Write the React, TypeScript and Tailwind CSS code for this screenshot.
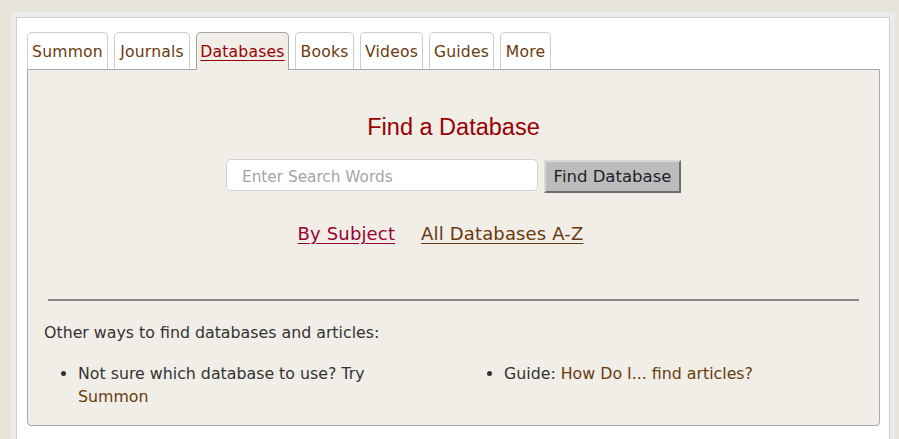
import React from "react";

const tabs: { label: string; w: string }[] = [
  { label: "Summon", w: "w-[81px]" },
  { label: "Journals", w: "w-[76px]" },
  { label: "Databases", w: "w-[93px]" },
  { label: "Books", w: "w-[59px]" },
  { label: "Videos", w: "w-[63px]" },
  { label: "Guides", w: "w-[65px]" },
  { label: "More", w: "w-[51px]" },
];

export default function App() {
  return (
    <div
      className="min-h-screen bg-[#e6e4d9] pt-[12px] pl-[11px] pr-[4px] overflow-hidden"
      style={{ fontFamily: '"DejaVu Sans", Verdana, sans-serif' }}
    >
      <div className="bg-[#ebebeb] pt-[5px] px-[5px] h-[440px]">
        <div className="bg-white border border-[#cfcfcf] border-b-0 h-full pt-[14px] pl-[10px] pr-[9px]">
          <div className="flex items-end gap-[6px]">
            {tabs.map((t) => {
              const active = t.label === "Databases";
              return (
                <div
                  key={t.label}
                  className={
                    (active
                      ? "relative z-10 h-[38px] -mb-px pt-[3px] border-[#a3a3a3] bg-[#f1eee8] text-[#990000] underline underline-offset-[3px]"
                      : "h-[37px] pt-[4px] border-[#cccccc] bg-white text-[#6a3a0c]") +
                    " " +
                    t.w +
                    " flex items-center justify-center rounded-t-[5px] border border-b-0 text-[15.6px] tracking-[0.2px]"
                  }
                >
                  {t.label}
                </div>
              );
            })}
          </div>
          <div className="border border-[#a8a8a8] rounded-b-[4px] bg-[#f1eee8] h-[357px]">
            <div className="pt-[43px] flex flex-col items-center">
              <h2
                className="text-[23.5px] leading-[28px] text-[#990000]"
                style={{ fontFamily: '"Liberation Sans", Arial, sans-serif' }}
              >
                Find a Database
              </h2>
              <div className="mt-[18px] flex items-start">
                <input
                  className="w-[312px] h-[32px] rounded-[5px] border border-[#d2d2d2] bg-white px-[15px] pt-[3px] text-[15.3px] text-[#333] placeholder:text-[#a4a4a4] outline-none"
                  placeholder="Enter Search Words"
                  style={{ fontFamily: '"DejaVu Sans", Verdana, sans-serif' }}
                />
                <button
                  className="ml-[6px] mt-px h-[33px] w-[137px] pt-px bg-[#bcbcbc] border-2 border-t-[#d8d8d8] border-l-[#d8d8d8] border-r-[#6e6e6e] border-b-[#6e6e6e] text-[16.5px] text-[#1f1f2a]"
                  style={{ fontFamily: '"DejaVu Sans", Verdana, sans-serif' }}
                >
                  Find Database
                </button>
              </div>
              <div className="mt-[30px] flex text-[18px] leading-[22px] tracking-[0.15px]">
                <a className="mr-[26px] text-[#99002e] underline underline-offset-[3px]">By Subject</a>
                <a className="mr-[26px] text-[#6a3a0c] underline underline-offset-[3px]">All Databases A-Z</a>
              </div>
            </div>
            <div className="mt-[54px] mx-[20px] h-[2px] bg-[#8a8a8a]" />
            <div className="pl-[16px] pt-[20px] text-[15.8px] leading-[23px] text-[#333]">
              <p>Other ways to find databases and articles:</p>
              <ul className="mt-[18px] grid grid-cols-[426px_1fr] list-disc pl-[34px]">
                <li className="pr-[90px]">
                  Not sure which database to use? Try <a className="text-[#6a3a0c]">Summon</a>
                </li>
                <li>
                  Guide: <a className="text-[#6a3a0c]">How Do I... find articles?</a>
                </li>
              </ul>
            </div>
          </div>
        </div>
      </div>
    </div>
  );
}
